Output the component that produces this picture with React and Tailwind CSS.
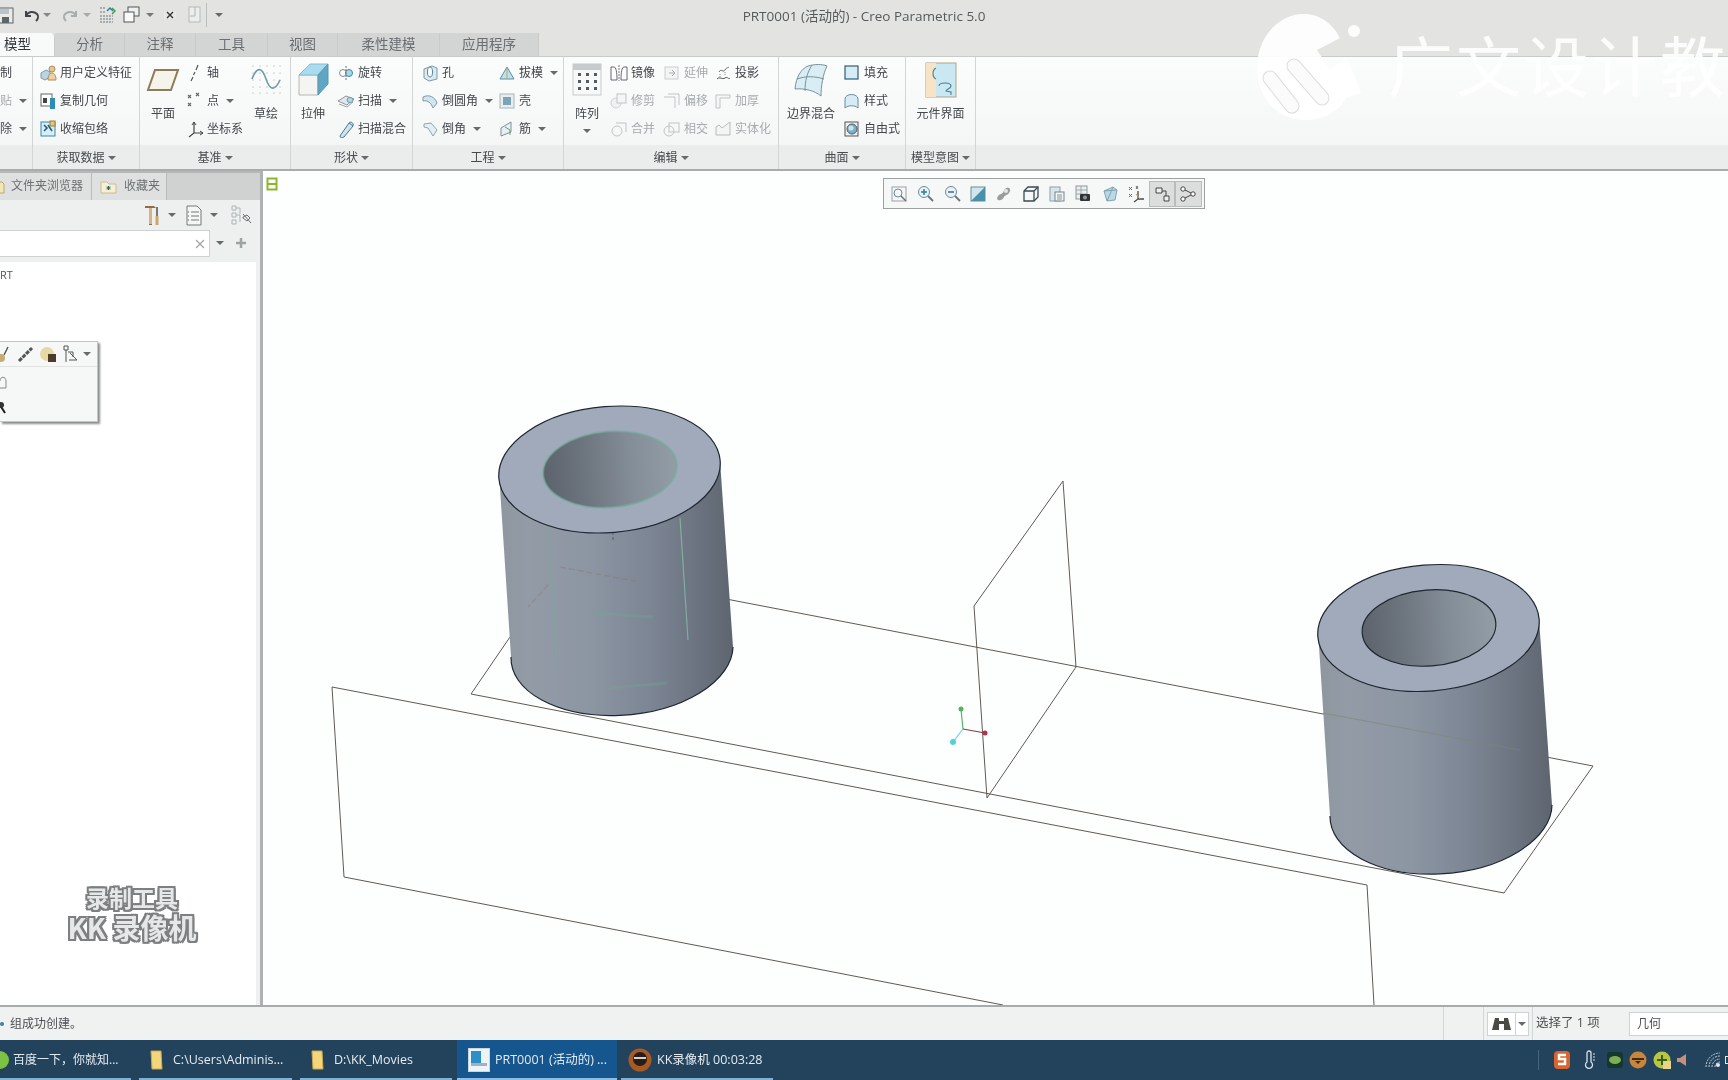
import React from "react";

const S = ({ w = 18, h = 18, vb, children, className = "" }) => (
  <svg width={w} height={h} viewBox={vb || `0 0 ${w} ${h}`} className={`shrink-0 ${className}`} fill="none">
    {children}
  </svg>
);

const Caret = ({ className = "" }) => (
  <span className={`inline-block w-0 h-0 border-x-[4px] border-t-[4px] border-x-transparent border-t-[#666a6c] ${className}`} />
);

/* ---------- ribbon small icons ---------- */
const IUdf = () => (<S><path d="M2 9l5-3 4 2v5l-5 3-4-2z" fill="#bcd3e2" stroke="#7d97a8" /><circle cx="13" cy="5" r="3" fill="#e6c590" stroke="#b08d55" /><path d="M9 16c0-5 2-7 4-7s4 2 4 7z" fill="#e9d2a6" stroke="#b08d55" /></S>);
const ICopy = () => (<S><rect x="2" y="2" width="11" height="12" fill="#fff" stroke="#666" /><rect x="4" y="6" width="4" height="5" fill="#444" /><rect x="11" y="6" width="5" height="11" fill="#2b8fb5" /></S>);
const IShrink = () => (<S><rect x="2" y="2" width="14" height="14" fill="#d6eef7" stroke="#3a86a8" /><path d="M5 5l3 3-3 3M9 5l4 6" stroke="#2a5e78" strokeWidth="1.6" /><rect x="11" y="1" width="5" height="5" fill="#e4c77c" stroke="#94803f" /></S>);
const IAxis = () => (<S><path d="M12 1l-2 5M9 8l-1.500 3M7 13l-2 4" stroke="#555" strokeWidth="1.200" /></S>);
const IPoint = () => (<S><path d="M2 3l3 3M5 3L2 6M10 1l3 3M13 1l-3 3M2 11l3 3M5 11l-3 3" stroke="#666" strokeWidth="1.100" /></S>);
const ICsys = () => (<S><path d="M8 2v11l-5 4M8 13h9" stroke="#444" strokeWidth="1.200" /><path d="M8 2l-2 3M8 2l2 3M17 13l-3-2M17 13l-3 2" stroke="#444" /></S>);
const IRevolve = () => (<S><circle cx="6" cy="9" r="3.500" stroke="#7b8f9a" /><circle cx="12" cy="9" r="3.500" fill="#a9d6e8" stroke="#3e88ad" /><path d="M9 2v14" stroke="#777" strokeDasharray="2 1" /></S>);
const ISweep = () => (<S><path d="M1 9l8-5 8 3-7 6z" fill="#e4e7e8" stroke="#8b979d" /><ellipse cx="13" cy="8" rx="3" ry="2.500" fill="#b9d8e6" stroke="#6f97aa" /><path d="M2 12l8 3 6-5" stroke="#9aa5ab" /></S>);
const ISweepBlend = () => (<S><path d="M3 16L12 3c2-2 5 0 4 3L7 17c-2 1-4 1-4-1z" fill="#cfe4ee" stroke="#47788f" /><path d="M12 3l4 3" stroke="#47788f" /></S>);
const IHole = () => (<S><path d="M3 5l8-3 5 2v11l-8 2-5-3z" fill="#d9eaf1" stroke="#7a9aa9" /><ellipse cx="9" cy="8" rx="2.500" ry="5" fill="#fff" stroke="#5d8296" /></S>);
const IRound = () => (<S><path d="M2 5c6-3 12 0 14 6l-4 5C10 11 7 8 2 9z" fill="#cfe6ef" stroke="#7e9aa7" /></S>);
const IChamfer = () => (<S><path d="M3 4l7-1 6 7-4 6-5-8-4-1z" fill="#e5eff3" stroke="#8fa5af" /></S>);
const IDraft = () => (<S><path d="M2 15L9 3l7 12z" fill="#bfe0ec" stroke="#5d8ea4" /><path d="M9 3v12" stroke="#bca25f" /></S>);
const IShell = () => (<S><rect x="2" y="2" width="14" height="14" fill="#e7eef1" stroke="#a7b5bb" /><rect x="5" y="5" width="8" height="8" fill="#7ea3b8" /></S>);
const IRib = () => (<S><path d="M3 8l10-6v10L3 16z" fill="#e8eff2" stroke="#7b929c" /><path d="M7 7l5 3v5" stroke="#6c9a75" /></S>);
const IMirror = () => (<S><path d="M1 3h3c2 0 3 5 3 13H1zM17 3h-3c-2 0-3 5-3 13h6z" fill="#fff" stroke="#667" /><path d="M9 1v16" stroke="#777" strokeDasharray="2 1" /></S>);
const IExtend = () => (<S className="opacity-50"><rect x="2" y="3" width="13" height="12" fill="#eef0f1" stroke="#9aa2a6" /><path d="M6 9h6M9 6l3 3-3 3" stroke="#666" /></S>);
const IProject = () => (<S><path d="M3 15c3-3 5 1 8-1s3 2 5 0" stroke="#555" /><path d="M5 8c2-4 4 1 6-2s3-2 4-3" stroke="#666" /><path d="M6 10v3M11 8v4" stroke="#888" strokeDasharray="1 1" /></S>);
const ITrim = () => (<S className="opacity-50"><circle cx="6" cy="11" r="5" fill="#e9ebec" stroke="#9aa" /><rect x="7" y="2" width="9" height="9" fill="#f2f3f3" stroke="#8a9194" /></S>);
const IOffset = () => (<S className="opacity-50"><path d="M1 5h11v11M5 2h11v11" stroke="#8a9194" /></S>);
const IThicken = () => (<S className="opacity-50"><path d="M2 3h14v3H6v10H2z" fill="#f3f4f4" stroke="#8a9194" /></S>);
const IMerge = () => (<S className="opacity-50"><circle cx="7" cy="11" r="5" stroke="#8a9194" /><path d="M6 3h10v9" stroke="#8a9194" /></S>);
const IIntersect = () => (<S className="opacity-50"><circle cx="6" cy="11" r="5" stroke="#8a9194" /><rect x="6" y="3" width="10" height="9" stroke="#8a9194" /></S>);
const ISolid = () => (<S className="opacity-50"><path d="M2 7l3-2 3 3 8-6v13H2z" fill="#f2f3f3" stroke="#7a8184" /></S>);
const IFill = () => (<S><rect x="2" y="2" width="13" height="13" fill="#d7ebf4" stroke="#2f5d78" strokeWidth="1.200" /></S>);
const IStyle = () => (<S><path d="M2 16V7c0-6 13-6 13 0v9c-3-3-10-3-13 0z" fill="#d7ebf4" stroke="#6c8c9c" /></S>);
const IFree = () => (<S><rect x="2" y="2" width="13" height="14" fill="#eef1f2" stroke="#555" /><circle cx="9" cy="9" r="5" fill="#7fb0c8" stroke="#46606e" /><circle cx="8" cy="8" r="2.500" fill="#cfe3ec" /></S>);

/* ---------- ribbon big icons ---------- */
const BPlane = () => (<S w={34} h={26}><path d="M9 3h23l-7 20H2z" fill="#f6f3ea" stroke="#8d7c58" strokeWidth="2" /></S>);
const BSketch = () => (
  <S w={32} h={34}>
    {[3, 10, 17, 24, 30].map((x) => [3, 10, 17, 24, 30].map((y) => <circle key={x + "-" + y} cx={x} cy={y} r=".5" fill="#888" />))}
    <path d="M2 16C7 3 12 4 16 16s9 12 14 1" stroke="#6f9bac" strokeWidth="1.600" />
  </S>
);
const BExtrude = () => (
  <S w={32} h={36}>
    <path d="M2 13h19v20H2z" fill="#f4f5f2" stroke="#b5b8b0" />
    <path d="M2 13L13 2h18L21 13z" fill="#a9dcee" stroke="#8abcd0" />
    <path d="M21 13L31 2v20L21 33z" fill="#5fa6c4" stroke="#5b97ae" />
  </S>
);
const BPattern = () => (
  <S w={30} h={34}>
    <rect x="1" y="1" width="28" height="31" fill="#f7f8f8" stroke="#c9cccc" />
    <rect x="1" y="1" width="28" height="6" fill="#c7cbcc" />
    {[10, 17, 24].map((y) => [6, 14, 22].map((x) => <rect key={x + "-" + y} x={x} y={y} width="3" height="3" fill="#555c60" />))}
  </S>
);
const BBoundary = () => (
  <S w={36} h={36}>
    <path d="M2 27C3 15 8 7 15 4c7-2 14-2 19 0-4 8-6 20-6 30-6-5-16-8-26-7z" fill="#d9edf5" stroke="#7a9199" />
    <path d="M19 3c-5 8-7 16-7 26M4 17c8-3 18-3 27 0" stroke="#7a9199" />
  </S>
);
const BInterface = () => (
  <S w={32} h={36}>
    <rect x="1" y="1" width="30" height="34" fill="#c9e8f1" stroke="#b0a486" />
    <path d="M1 1h10v5c-4 2-4 9 0 11v18H1z" fill="#f7e4c6" />
    <path d="M11 6c-4 2-4 9 0 11M14 24c0-4 12-4 12 0 0 3-5 3-5 5l5 1v3" stroke="#4a7f90" strokeWidth="1.100" />
  </S>
);

/* ---------- helpers ---------- */
const Row = ({ icon, text, arrow, off }) => (
  <div className={`h-7 flex items-center whitespace-nowrap text-[12px] ${off ? "text-[#a7abad]" : "text-[#43474a]"}`}>
    {icon}
    <span className="ml-[3px]">{text}</span>
    {arrow && <Caret className="ml-[7px]" />}
  </div>
);
const Col = ({ children, className = "" }) => <div className={`flex flex-col pt-[2px] ${className}`}>{children}</div>;
const Big = ({ icon, text, className = "", arrow }) => (
  <div className={`flex flex-col items-center pt-px text-[12px] text-[#43474a] whitespace-nowrap ${className}`}>
    <div className="h-[44px] flex items-center justify-center">{icon}</div>
    <div className="h-[24px] flex items-center">{text}</div>
    {arrow && <Caret className="mt-[3px]" />}
  </div>
);
const Group = ({ w, label, children }) => (
  <div className={`flex flex-col h-full border-r border-[#d4d6d6] ${w}`}>
    <div className="h-[88px] flex overflow-hidden">{children}</div>
    <div className="flex-1 flex items-center justify-center gap-[3px] pt-[2px] text-[12px] text-[#474b4e] bg-[#ebecec] whitespace-nowrap">
      {label}
      {label && <Caret />}
    </div>
  </div>
);

const Tab = ({ w, children, active }) => (
  <div className={`h-full flex items-center text-[13.5px] border-r border-[#c9cbca] ${w} ${active ? "pl-[4px] bg-[#f8f9f9] text-[#33373a] border-[#bcbebe] rounded-tr-sm" : "justify-center bg-[#d3d5d4] text-[#6a6e70]"}`}>
    {children}
  </div>
);

/* ---------- canvas toolbar icons ---------- */
const Z = ({ sign }) => (
  <S>
    <circle cx="8" cy="7" r="5.500" fill={sign ? "#e9f2f6" : "#f5f6f6"} stroke="#6e8b99" />
    {sign && <path d="M5 7h6" stroke={sign === "+" ? "#2d7f9c" : "#3a6f86"} strokeWidth="1.500" />}
    {sign === "+" && <path d="M8 4v6" stroke="#2d7f9c" strokeWidth="1.500" />}
    <path d="M12 11l5 5" stroke="#6a7478" strokeWidth="1.800" />
  </S>
);
const CanvasIcons = [
  <S key="a"><rect x="2" y="2" width="14" height="14" fill="#f5f6f6" stroke="#9aa2a5" /><circle cx="8" cy="8" r="4" stroke="#6e8b99" /><path d="M11 11l5 5" stroke="#6a7478" strokeWidth="1.500" /></S>,
  <Z key="b" sign="+" />,
  <Z key="c" sign="-" />,
  <S key="d"><rect x="2" y="2" width="14" height="14" fill="#cfe6ef" stroke="#6b8b99" /><path d="M2 16L16 2v14z" fill="#4b8fa8" /></S>,
  <S key="e"><path d="M3 15c3 1 5-1 6-3s5-2 6-6-3-4-5-2-1 4-4 5-5 4-3 6z" fill="#9a9d9e" /><circle cx="11" cy="6" r="2" fill="#e5e6e6" /></S>,
  <S key="f"><path d="M2 6l4-4h10v10l-4 4H2z" fill="#f6f8f8" stroke="#3a4a52" strokeWidth="1.300" /><path d="M2 6h10v10M12 6l4-4" stroke="#3a4a52" strokeWidth="1.300" /></S>,
  <S key="g"><rect x="2" y="2" width="10" height="14" fill="#d8e6ec" stroke="#8aa0aa" /><rect x="7" y="7" width="9" height="9" fill="#f4f5f5" stroke="#77858b" /><path d="M9 10h5M9 12h5M9 14h5" stroke="#8a9498" /></S>,
  <S key="h"><rect x="2" y="1" width="11" height="13" fill="#eceff0" stroke="#8d979b" /><path d="M2 5h11M2 9h11M7 1v13" stroke="#a0a9ac" /><rect x="6" y="9" width="10" height="7" rx="1" fill="#303437" /><circle cx="11" cy="12.500" r="2" fill="#8d9599" /></S>,
  <S key="i"><path d="M3 6l9-4 4 3-2 10-8 1z" fill="#b9d9e5" stroke="#83a3b0" /><path d="M12 2L6 16M3 6l13-1" stroke="#83a3b0" /></S>,
  <S key="j"><path d="M2 2l3 3M5 2L2 5M9 1l2 3M11 1L9 4M2 9l3 3M5 9l-3 3" stroke="#666" /><path d="M11 6v8l-4 3M11 14h6" stroke="#43494c" strokeWidth="1.300" /><path d="M9 9l4 5" stroke="#b7a15a" /></S>,
  <S key="k"><path d="M3 3h6v5H3zM11 11h5v5h-5z" fill="#eef0f0" stroke="#444" /><path d="M9 6h4v5" stroke="#444" /></S>,
  <S key="l"><circle cx="4" cy="4" r="2.200" fill="#fff" stroke="#444" /><circle cx="14" cy="9" r="2.200" fill="#fff" stroke="#444" /><circle cx="4" cy="14" r="2.200" fill="#fff" stroke="#444" /><path d="M6 5l6 3M6 13l6-3" stroke="#444" /></S>,
];

/* ---------- geometry ---------- */
const Cylinder = ({ id, cx, cy, bl, br, holeStroke, children }) => (
  <g>
    <path d={`M${cx - 110.5} ${cy + 3} L${bl[0]} ${bl[1]} A111 63 -4.6 0 0 ${br[0]} ${br[1]} L${cx + 110.5} ${cy - 9} Z`} fill={`url(#${id}b)`} />
    <path d={`M${bl[0]} ${bl[1]} A111 63 -4.6 0 0 ${br[0]} ${br[1]}`} stroke="#1e2730" strokeWidth="1.200" fill="none" />
    {children}
    <ellipse cx={cx} cy={cy} rx="111" ry="63" transform={`rotate(-4.6 ${cx} ${cy})`} fill="#a0aaba" stroke="#1e2730" strokeWidth="1.200" />
    <ellipse cx={cx + 0.5} cy={cy} rx="67" ry="38" transform={`rotate(-4.6 ${cx} ${cy})`} fill={`url(#${id}h)`} stroke={holeStroke} strokeWidth={id === "a" ? 2 : 1.200} strokeOpacity={id === "a" ? 0.6 : 1} />
  </g>
);
const Defs = ({ id }) => (
  <>
    <linearGradient id={`${id}b`} x1="0" x2="1" y1="0" y2="0">
      <stop offset="0" stopColor="#8f969e" />
      <stop offset=".12" stopColor="#929ba6" />
      <stop offset=".4" stopColor="#8c96a3" />
      <stop offset=".65" stopColor="#7c8593" />
      <stop offset=".85" stopColor="#6b7380" />
      <stop offset="1" stopColor="#5e656f" />
    </linearGradient>
    <linearGradient id={`${id}h`} x1="0" x2="1" y1="0" y2="0">
      <stop offset="0" stopColor="#5c636c" />
      <stop offset=".3" stopColor="#6c747d" />
      <stop offset=".65" stopColor="#838d97" />
      <stop offset="1" stopColor="#939da6" />
    </linearGradient>
  </>
);

const Scene = () => (
  <svg className="absolute inset-0" width="1465" height="834" viewBox="263 171 1465 834" fill="none">
    <defs>
      <Defs id="a" />
      <Defs id="c" />
    </defs>
    <g stroke="#5f5a52" strokeWidth="1">
      <path d="M1003 1005L344 877 332 687 1367 885 1374 1005" />
      <path d="M510 637L471 694 1504 893 1593 766 560 567" />
      <path d="M1063 481L974 606 987 798 1076 667z" />
    </g>
    <path d="M963 729L961 709" stroke="#5fae6c" strokeWidth="1.200" />
    <path d="M963 729L985 733" stroke="#8a3b4a" strokeWidth="1.200" />
    <path d="M963 729L953 742" stroke="#70cfd2" strokeWidth="1.200" />
    <circle cx="961" cy="709" r="2.500" fill="#4fb65e" />
    <circle cx="985" cy="733" r="2.500" fill="#b5324a" />
    <circle cx="953" cy="742" r="3" fill="#56d0d4" />
    <Cylinder id="a" cx={609.5} cy={469.5} bl={[511, 657]} br={[733, 647]} holeStroke="#6fae9a">
      <g strokeWidth="1.200">
        <path d="M680 518L688 640" stroke="#86c6a8" opacity=".7" />
        <path d="M545 490L557 667" stroke="#7aa99c" opacity=".35" strokeWidth="3" />
        <path d="M610 688L667 683M593 613L653 617" stroke="#70a58f" opacity=".35" strokeWidth="3" />
        <path d="M613 507L613 540" stroke="#5d6670" strokeDasharray="4 2" />
        <path d="M560 567L640 582M548 585L528 607" stroke="#8a7a70" opacity=".5" strokeDasharray="6 3" />
      </g>
    </Cylinder>
    <Cylinder id="c" cx={1428.5} cy={628} bl={[1330, 816]} br={[1552, 805]} holeStroke="#1e2730">
      <path d="M1432 672L1433 692" stroke="#5d6670" strokeDasharray="4 2" />
      <path d="M1323 713L1520 750" stroke="#7e8570" opacity=".6" />
    </Cylinder>
  </svg>
);

/* ---------- App ---------- */
export default function App() {
  return (
    <div className="relative w-[1728px] h-[1080px] overflow-hidden flex flex-col bg-[#e3e4e1] blur-[0.35px] font-['Open_Sans','Noto_Sans_CJK_SC',sans-serif]">
      {/* title bar */}
      <div className="h-[33px] grid grid-cols-[1fr_auto_1fr] items-center">
        <div className="flex items-center h-full pb-[4px]">
          <S w={14} h={18} className="mr-[8px]"><rect x="-4" y="2" width="17" height="15" fill="#e9eaea" stroke="#5d6569" /><rect x="-1" y="3" width="10" height="5" fill="#b9c3c8" /><rect x="2" y="11" width="7" height="6" fill="#5d6569" /></S>
          <S w={18} h={16} className="mr-[3px]"><path d="M4 4v5h5M4 9c2-5 8-5 11-2 2 2 1 5-1 7" stroke="#3f4548" strokeWidth="2" /></S>
          <Caret className="mr-[11px] !border-t-[#888]" />
          <S w={18} h={16} className="mr-[3px]"><path d="M14 4v5H9M14 9c-2-5-8-5-11-2-2 2-1 5 1 7" stroke="#a9adaf" strokeWidth="2" /></S>
          <Caret className="mr-[7px] !border-t-[#aaa]" />
          <S w={20} h={20} className="mr-[4px]"><path d="M2 3h5M2 7h5M2 11h13M2 14h13M2 17h13" stroke="#66757c" strokeDasharray="2 1" /><path d="M9 6l3-3 3 3" stroke="#2d7f9c" strokeWidth="1.500" /><path d="M14 3l3 3-3 3" stroke="#4d9a4d" strokeWidth="1.500" /></S>
          <S w={20} h={20} className="mr-[4px]"><rect x="6" y="2" width="11" height="9" fill="#eef1f2" stroke="#555" /><rect x="2" y="7" width="10" height="10" fill="#f8f9f9" stroke="#555" /></S>
          <Caret className="mr-[8px] !border-t-[#777]" />
          <S w={16} h={16} className="mr-[8px]"><path d="M2 4h12v8H2z" fill="#e7e8e8" /><path d="M5 5l6 6M11 5l-6 6" stroke="#333" strokeWidth="1.400" /></S>
          <S w={18} h={20} className="mr-[2px]"><rect x="3" y="2" width="11" height="15" fill="#eceded" stroke="#b6baba" /><path d="M9 2v9H4" stroke="#b0b4b4" /></S>
          <div className="w-px h-[24px] bg-[#bcbebe] mr-[8px]" />
          <Caret />
        </div>
        <div className="text-[13.500px] text-[#565a5c] whitespace-nowrap">PRT0001 (活动的) - Creo Parametric 5.0</div>
        <div />
      </div>

      {/* tabs */}
      <div className="h-[24px] flex items-stretch border-b border-[#c9cbca]">
        <Tab w="w-[55px]" active>模型</Tab>
        <Tab w="w-[70px]">分析</Tab>
        <Tab w="w-[71px]">注释</Tab>
        <Tab w="w-[72px]">工具</Tab>
        <Tab w="w-[70px]">视图</Tab>
        <Tab w="w-[102px]">柔性建模</Tab>
        <Tab w="w-[99px]">应用程序</Tab>
      </div>

      {/* ribbon */}
      <div className="h-[114px] flex bg-gradient-to-b from-[#fbfcfc] to-[#f3f4f4] border-b-2 border-[#a9acac]">
        <Group w="w-[33px]" label="">
          <Col className="-ml-[3px] shrink-0">
            <Row text="制" />
            <Row text="贴" off arrow />
            <Row text="除" arrow />
          </Col>
        </Group>
        <Group w="w-[107px]" label="获取数据">
          <Col className="pl-[6px]">
            <Row icon={<IUdf />} text="用户定义特征" />
            <Row icon={<ICopy />} text="复制几何" />
            <Row icon={<IShrink />} text="收缩包络" />
          </Col>
        </Group>
        <Group w="w-[151px]" label="基准">
          <Big icon={<BPlane />} text="平面" className="w-[46px]" />
          <Col className="w-[58px]">
            <Row icon={<IAxis />} text="轴" />
            <Row icon={<IPoint />} text="点" arrow />
            <Row icon={<ICsys />} text="坐标系" />
          </Col>
          <Big icon={<BSketch />} text="草绘" className="w-[44px]" />
        </Group>
        <Group w="w-[122px]" label="形状">
          <Big icon={<BExtrude />} text="拉伸" className="w-[44px]" />
          <Col className="pl-[2px]">
            <Row icon={<IRevolve />} text="旋转" />
            <Row icon={<ISweep />} text="扫描" arrow />
            <Row icon={<ISweepBlend />} text="扫描混合" />
          </Col>
        </Group>
        <Group w="w-[151px]" label="工程">
          <Col className="pl-[8px] w-[85px]">
            <Row icon={<IHole />} text="孔" />
            <Row icon={<IRound />} text="倒圆角" arrow />
            <Row icon={<IChamfer />} text="倒角" arrow />
          </Col>
          <Col>
            <Row icon={<IDraft />} text="拔模" arrow />
            <Row icon={<IShell />} text="壳" />
            <Row icon={<IRib />} text="筋" arrow />
          </Col>
        </Group>
        <Group w="w-[215px]" label="编辑">
          <Big icon={<BPattern />} text="阵列" className="w-[46px]" arrow />
          <Col className="w-[53px]">
            <Row icon={<IMirror />} text="镜像" />
            <Row icon={<ITrim />} text="修剪" off />
            <Row icon={<IMerge />} text="合并" off />
          </Col>
          <Col className="w-[51px]">
            <Row icon={<IExtend />} text="延伸" off />
            <Row icon={<IOffset />} text="偏移" off />
            <Row icon={<IIntersect />} text="相交" off />
          </Col>
          <Col>
            <Row icon={<IProject />} text="投影" />
            <Row icon={<IThicken />} text="加厚" off />
            <Row icon={<ISolid />} text="实体化" off />
          </Col>
        </Group>
        <Group w="w-[127px]" label="曲面">
          <Big icon={<BBoundary />} text="边界混合" className="w-[64px]" />
          <Col>
            <Row icon={<IFill />} text="填充" />
            <Row icon={<IStyle />} text="样式" />
            <Row icon={<IFree />} text="自由式" />
          </Col>
        </Group>
        <Group w="w-[70px]" label="模型意图">
          <Big icon={<BInterface />} text="元件界面" className="w-[70px]" />
        </Group>
        <div className="flex-1 flex flex-col">
          <div className="h-[88px]" />
          <div className="flex-1 bg-[#ebecec]" />
        </div>
      </div>

      {/* body */}
      <div className="flex-1 flex min-h-0">
        <div className="relative w-[260px] flex flex-col bg-[#eef0f0]">
          <div className="h-[29px] flex bg-[#cfd2d1] border-t-2 border-[#b6b8b8] text-[12px] text-[#6b7072]">
            <div className="w-[92px] flex items-center pb-[2px] bg-[#dfe1e0] border-r border-[#b9bcbb] whitespace-nowrap">
              <S w={7} h={16} className="mr-[4px]"><path d="M-8 4h10l2 2v9H-8z" fill="#f3e7b8" stroke="#b7a86d" /></S>
              文件夹浏览器
            </div>
            <div className="w-[75px] flex items-center pl-[8px] pb-[2px] gap-[7px] bg-[#dfe1e0] border-r border-[#b9bcbb] whitespace-nowrap">
              <S w={17} h={16}><path d="M1 4h6l2 2h7v9H1z" fill="#f6efd6" stroke="#c9bd92" /><path d="M6.500 10h4M8.500 8v4M7 8.500l3 3M10 8.500l-3 3" stroke="#2d5e58" /></S>
              收藏夹
            </div>
          </div>
          <div className="h-[28px] flex items-center pl-[144px] pt-[2px]">
            <S w={16} h={22} className="mr-[8px]"><path d="M1 2h9l2 2H8v17H5V4H1z" fill="#8a6f47" /><rect x="5" y="4" width="3" height="16" fill="#d4b483" /><rect x="12" y="3" width="2" height="9" fill="#777" /><rect x="11.500" y="12" width="3" height="9" fill="#c9a86b" /></S>
            <Caret className="mr-[10px]" />
            <S w={16} h={21} className="mr-[8px]"><path d="M1 1h10l4 4v15H1z" fill="#f5f6f6" stroke="#777" /><path d="M5 7h8M5 11h8M5 15h8" stroke="#777" /><path d="M2 7h1M2 11h1M2 15h1" stroke="#555" /></S>
            <Caret className="mr-[12px]" />
            <S w={22} h={22}><path d="M2 2h4v4H2zM2 9h4v4H2zM2 16h4v4H2zM6 4h4v6M6 11h4v7" stroke="#adb3b5" /><path d="M13 10l8 9M13 13l4-2 3 3-3 3-4-3z" stroke="#6b7275" /></S>
          </div>
          <div className="h-[34px] flex items-start pt-[2px]">
            <div className="w-[210px] h-[27px] bg-white border border-[#cfd2d2] border-l-0 flex items-center justify-end pr-[3px]">
              <S w={12} h={12}><path d="M2 2l8 8M10 2l-8 8" stroke="#a3a7a8" strokeWidth="1.300" /></S>
            </div>
            <Caret className="ml-[6px] mt-[11px]" />
            <S w={14} h={14} className="ml-[10px] mt-[6px]"><path d="M7 2v10M2 7h10" stroke="#9ea3a4" strokeWidth="2.500" /></S>
          </div>
          <div className="flex-1 bg-white mr-[4px] pt-[5px] text-[11px] text-[#555]">RT</div>
          <div className="absolute left-0 top-[170px] w-[98px] h-[81px] bg-[#f6f7f7] border border-l-0 border-[#c4c6c6] shadow-[2px_2px_2px_#8b8d8d] flex flex-col">
            <div className="h-[25px] flex items-center border-b border-[#e2e3e3]">
              <S w={10} h={18} className="mr-[7px]"><path d="M8 2L4 10" stroke="#444" strokeWidth="1.300" /><circle cx="1" cy="13" r="4" fill="#c5ad74" /></S>
              <S w={17} h={17} className="mr-[6px]"><path d="M2 15l13-13" stroke="#555" strokeWidth="3" strokeDasharray="4 1" /></S>
              <S w={17} h={17} className="mr-[5px]"><circle cx="7" cy="8" r="7" fill="#e7d9a5" /><rect x="8" y="8" width="8" height="8" fill="#4c3a2a" /></S>
              <S w={17} h={18} className="mr-[4px]"><path d="M2 1h4v4H2zM4 5v12M6 7h5v5M8 8l7 7H7" stroke="#555" /></S>
              <Caret />
            </div>
            <div className="h-[28px] flex items-center">
              <S w={8} h={16}><path d="M0 8c0-5 6-5 6 0v7H0" stroke="#888" /></S>
            </div>
            <div className="h-[26px] flex items-center">
              <S w={8} h={14}><path d="M0 4l5 8" stroke="#222" strokeWidth="2" /><circle cx="1" cy="4" r="3" fill="#333" /></S>
            </div>
          </div>
        </div>
        <div className="w-[3px] bg-[#aeb1b1]" />

        {/* canvas */}
        <div className="relative flex-1 bg-[#fdfefe] overflow-hidden">
          <Scene />
          <S w={12} h={14} className="absolute left-[3px] top-[6px]"><rect x="1.500" y="1.500" width="9" height="11" stroke="#8fb52b" strokeWidth="2" /><path d="M1 7h10" stroke="#8fb52b" strokeWidth="2" /></S>
          <div className="absolute left-[620px] top-[7px] w-[322px] h-[31px] bg-[#f6f7f7] border border-[#9da1a2] flex items-center pl-[2px]">
            {CanvasIcons.map((ic, i) => (
              <div key={i} className={`w-[26.300px] h-[26px] shrink-0 flex items-center justify-center ${i >= 10 ? "bg-[#dcdede] border border-[#b9bcbd]" : ""}`}>
                {ic}
              </div>
            ))}
          </div>
        </div>
      </div>

      {/* status bar */}
      <div className="h-[35px] flex items-center bg-[#f0f1f1] border-t-2 border-[#a8abab] text-[12px] text-[#4c5052]">
        <span className="w-[4px] h-[4px] rounded-full bg-[#3d7f9e] mr-[6px]" />
        <span>组成功创建。</span>
        <div className="ml-auto h-full flex items-center">
          <div className="w-[41px] h-full border-x border-[#d5d7d7]" />
          <div className="ml-[3px] w-[42px] h-[24px] bg-white border border-[#cfd2d2] flex items-center">
            <S w={27} h={18}><path d="M7 3h4v3h5V3h4l3 12h-7V9h-5v6H4z" fill="#4a4a44" /></S>
            <div className="h-full border-l border-[#cfd2d2] flex-1 flex items-center justify-center"><Caret /></div>
          </div>
          <div className="ml-[3px] h-full border-l border-[#d5d7d7] pl-[3px] w-[97px] flex items-center text-[12.500px]">选择了 1 项</div>
          <div className="w-[99px] h-[24px] bg-white border border-[#cfd2d2] border-r-0 pl-[7px] flex items-center">几何</div>
        </div>
      </div>

      {/* taskbar */}
      <div className="h-[40px] flex bg-[#23435c] text-[12.500px] text-[#e4ebf0] whitespace-nowrap">
        <div className="w-[131px] flex items-center pt-[2px] border-b-2 border-[#7fb2d6]">
          <span className="w-[18px] h-[18px] rounded-full bg-[#7cc243] -ml-[9px] mr-[4px] shrink-0" />
          <span className="text-[12px]">百度一下，你就知...</span>
        </div>
        <div className="ml-[8px] w-[153px] flex items-center pl-[10px] pt-[2px] gap-[8px] border-b-2 border-[#7fb2d6]">
          <S w={16} h={20}><path d="M2 1h10l1 18H3z" fill="#f3d67a" stroke="#c9a94e" /></S>
          C:\Users\Adminis...
        </div>
        <div className="ml-[8px] w-[152px] flex items-center pl-[10px] pt-[2px] gap-[8px] border-b-2 border-[#7fb2d6]">
          <S w={16} h={20}><path d="M2 1h10l1 18H3z" fill="#f3d67a" stroke="#c9a94e" /></S>
          D:\KK_Movies
        </div>
        <div className="ml-[5px] w-[160px] flex items-center pl-[11px] pt-[2px] gap-[5px] bg-[#15568e] border-b-2 border-[#8cc0e2]">
          <S w={22} h={24}><rect x="0.500" y="0.500" width="21" height="23" fill="#eef3f5" stroke="#c9d6dd" /><rect x="3" y="3" width="10" height="14" fill="#2d8fc8" /><rect x="3" y="15" width="16" height="3" fill="#9fb3bd" /></S>
          PRT0001 (活动的) ...
        </div>
        <div className="ml-[4px] w-[152px] flex items-center pl-[7px] pt-[2px] gap-[5px] border-b-2 border-[#7fb2d6]">
          <S w={24} h={24}><circle cx="12" cy="12" r="11.500" fill="#a85a25" /><circle cx="12" cy="11" r="7" fill="#2a1c18" /><path d="M6 10h12" stroke="#d2d2cf" strokeWidth="2" /></S>
          KK录像机 00:03:28
        </div>
        <div className="ml-auto flex items-center h-full">
          <div className="w-px h-[20px] bg-[#46657d] mr-[14px]" />
          <S w={18} h={20} className="mr-[13px]"><rect x="1" y="1" width="16" height="18" rx="4" fill="#d9642d" /><path d="M13 5H6v4h6v5H5" stroke="#fff" strokeWidth="2.500" /></S>
          <S w={12} h={20} className="mr-[10px]"><path d="M3 3a2 2 0 014 0v9a3.500 3.500 0 11-4 0z" stroke="#d7e3ec" strokeWidth="1.300" /><path d="M9 4h2M9 7h2M9 10h2" stroke="#d7e3ec" /></S>
          <S w={18} h={18} className="mr-[5px]"><rect x="1" y="1" width="16" height="16" rx="3" fill="#12382f" /><ellipse cx="9" cy="9" rx="6" ry="4" fill="#7fae52" /></S>
          <S w={18} h={18} className="mr-[6px]"><circle cx="9" cy="9" r="8.500" fill="#c9853a" /><rect x="3" y="7" width="12" height="2" fill="#3a2a1a" /><path d="M6 10h6l-3 3z" fill="#3a2a1a" /></S>
          <S w={18} h={18} className="mr-[5px]"><circle cx="9" cy="9" r="8.500" fill="#b7c83e" /><path d="M9 4v10M4 9h10" stroke="#3f5a20" strokeWidth="2" /><rect x="10" y="10" width="8" height="8" fill="#e8d488" /></S>
          <S w={14} h={16} className="mr-[15px]"><path d="M1 6h3l6-4v12l-6-4H1z" fill="#c98f7a" /></S>
          <S w={16} h={16} className="mr-[4px]"><path d="M1 15a14 14 0 0114-14M4 15a11 11 0 0111-11M7 15a8 8 0 018-8M10 15a5 5 0 015-5" stroke="#c3d2dd" strokeDasharray="2 1" /><circle cx="13" cy="13" r="2" fill="#dfe8ee" /></S>
          <span className="w-[5px] h-[8px] border border-[#dfe8ee] -mr-[2px]" />
        </div>
      </div>

      {/* top-right channel watermark */}
      <svg className="absolute left-[1250px] top-[8px]" width="120" height="120" viewBox="1250 8 120 120" fill="none">
        <path d="M1304 14C1320 14 1333 24 1340 38L1317 50 1330 70 1346 57 1361 93 1346 98C1338 113 1322 120 1304 120 1275 120 1257 95 1257 68 1257 38 1278 14 1304 14Z" fill="#ffffff" fillOpacity=".92" />
        <circle cx="1354" cy="31" r="6" fill="#ffffff" fillOpacity=".92" />
        <path d="M1270 78L1292 106M1294 66L1322 98" stroke="#dcdede" strokeWidth="15" strokeLinecap="round" />
        <path d="M1270 78L1292 106M1294 66L1322 98" stroke="#fbfbfb" strokeWidth="13" strokeLinecap="round" />
      </svg>
      <div className="absolute left-[1388px] top-[18px] text-[65px] leading-[90px] tracking-[3px] text-white/90 whitespace-nowrap font-['Noto_Sans_CJK_SC',sans-serif]">广文设计教</div>

      {/* recorder watermark */}
      <div className="absolute left-[52px] top-[882px] w-[160px] flex flex-col items-center font-['Noto_Sans_CJK_SC',sans-serif] font-bold text-[#e6e7e7] [text-shadow:2px_0_#7d7f80,-2px_0_#7d7f80,0_2px_#7d7f80,0_-2px_#7d7f80,2px_2px_#7d7f80,-2px_2px_#7d7f80,2px_-2px_#7d7f80,-2px_-2px_#7d7f80] whitespace-nowrap">
        <div className="text-[23px] leading-[30px]">录制工具</div>
        <div className="text-[28px] leading-[30px]">KK 录像机</div>
      </div>
    </div>
  );
}
